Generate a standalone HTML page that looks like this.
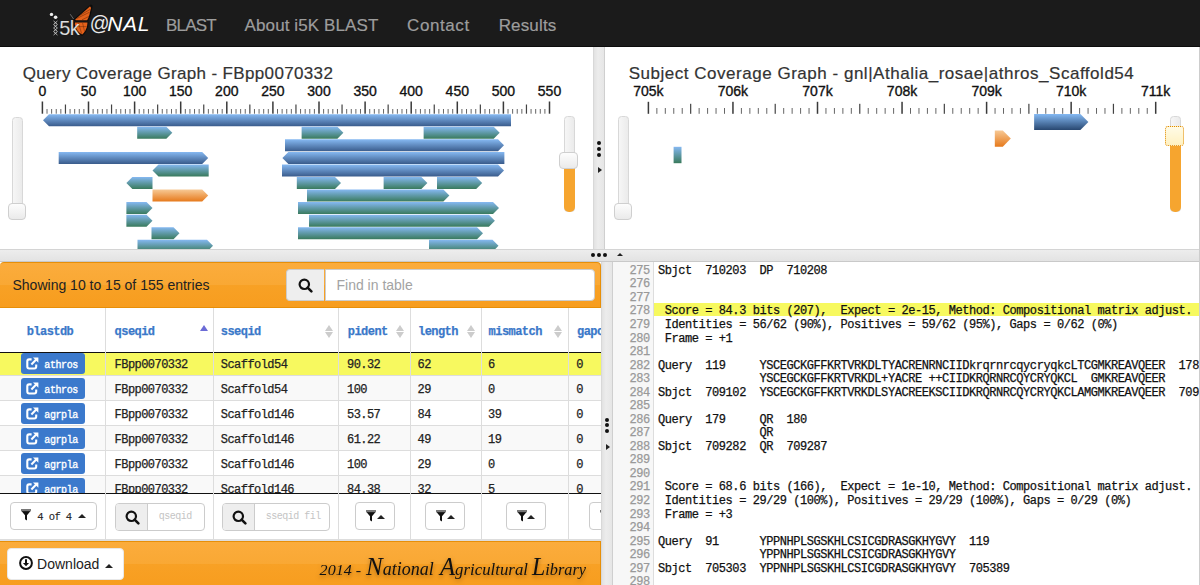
<!DOCTYPE html><html><head><meta charset="utf-8"><title>i5K BLAST</title><style>
*{box-sizing:border-box;margin:0;padding:0}
html,body{width:1200px;height:585px;overflow:hidden;background:#fff}
body{position:relative;font-family:"Liberation Sans",sans-serif;color:#333}
.a{position:absolute}
#hdr{left:0;top:0;width:1200px;height:47px;background:#1b1b1b;border-bottom:1px solid #0c0c0c}
.nav{position:absolute;top:15px;font-size:17px;color:#9d9d9d;-webkit-text-stroke:0.2px #9d9d9d;white-space:nowrap;line-height:22px}
.vdiv{background:linear-gradient(to right,#e2e2e2,#ececec 40%,#e6e6e6);border-left:1px solid #d8d8d8;border-right:1px solid #cfcfcf}
.hdiv{background:linear-gradient(#ededed,#e3e3e3);border-top:1px solid #d4d4d4;border-bottom:1px solid #c9c9c9}
.dot{position:absolute;width:4px;height:4px;border-radius:50%;background:#111}
.title{position:absolute;font-size:17px;color:#333;-webkit-text-stroke:0.2px #333;white-space:nowrap;line-height:20px}
.track{position:absolute;border:1px solid #d8d8d8;border-radius:3.5px;background:linear-gradient(to right,#f6f6f6,#ebebeb)}
.handle{position:absolute;border:1px solid #cfcfcf;border-radius:4px;background:linear-gradient(#fdfdfd,#eaeaea)}
.orangebar{background:linear-gradient(#fbac3c 0%,#f9a834 50%,#f8a125 50%,#f79d1f 100%);border:1px solid #e78f08}
.mono{font-family:"Liberation Mono",monospace;-webkit-text-stroke:0.25px currentColor}
</style></head><body>
<div id="hdr" class="a"></div>
<div class="nav" style="left:166px;letter-spacing:-0.8px">BLAST</div>
<div class="nav" style="left:244.6px;letter-spacing:0.1px">About i5K BLAST</div>
<div class="nav" style="left:407px;letter-spacing:0.6px">Contact</div>
<div class="nav" style="left:498.7px;letter-spacing:0.15px">Results</div>
<div class="a vdiv" style="left:593px;top:47px;width:12px;height:202px"></div>
<div class="a hdiv" style="left:0;top:249px;width:1200px;height:13px"></div>
<div class="a vdiv" style="left:601px;top:262px;width:12px;height:323px"></div>
<svg class="a" style="left:0;top:47px" width="593" height="202" viewBox="0 47 593 202"><defs>
<linearGradient id="gB" x1="0" y1="0" x2="0" y2="1"><stop offset="0" stop-color="#86b9f2"/><stop offset="1" stop-color="#3a5c8c"/></linearGradient>
<linearGradient id="gT" x1="0" y1="0" x2="0" y2="1"><stop offset="0" stop-color="#85b8f1"/><stop offset="1" stop-color="#397a5c"/></linearGradient>
<linearGradient id="gO" x1="0" y1="0" x2="0" y2="1"><stop offset="0" stop-color="#f7c995"/><stop offset="1" stop-color="#e6791b"/></linearGradient>
<linearGradient id="gB2" x1="0" y1="0" x2="0" y2="1"><stop offset="0" stop-color="#84b9f3"/><stop offset="1" stop-color="#284770"/></linearGradient>
</defs>
<rect x="41.65" y="101.5" width="1.5" height="12.2" fill="#3a3a3a"/>
<rect x="46.51" y="109" width="1" height="4.7" fill="#666"/>
<rect x="51.12" y="109" width="1" height="4.7" fill="#666"/>
<rect x="55.73" y="109" width="1" height="4.7" fill="#666"/>
<rect x="60.34" y="109" width="1" height="4.7" fill="#666"/>
<rect x="64.85" y="104.5" width="1.2" height="9.2" fill="#444"/>
<rect x="69.56" y="109" width="1" height="4.7" fill="#666"/>
<rect x="74.17" y="109" width="1" height="4.7" fill="#666"/>
<rect x="78.78" y="109" width="1" height="4.7" fill="#666"/>
<rect x="83.39" y="109" width="1" height="4.7" fill="#666"/>
<rect x="87.75" y="101.5" width="1.5" height="12.2" fill="#3a3a3a"/>
<rect x="92.61" y="109" width="1" height="4.7" fill="#666"/>
<rect x="97.22" y="109" width="1" height="4.7" fill="#666"/>
<rect x="101.83" y="109" width="1" height="4.7" fill="#666"/>
<rect x="106.44" y="109" width="1" height="4.7" fill="#666"/>
<rect x="110.95" y="104.5" width="1.2" height="9.2" fill="#444"/>
<rect x="115.66" y="109" width="1" height="4.7" fill="#666"/>
<rect x="120.27" y="109" width="1" height="4.7" fill="#666"/>
<rect x="124.88" y="109" width="1" height="4.7" fill="#666"/>
<rect x="129.49" y="109" width="1" height="4.7" fill="#666"/>
<rect x="133.85" y="101.5" width="1.5" height="12.2" fill="#3a3a3a"/>
<rect x="138.71" y="109" width="1" height="4.7" fill="#666"/>
<rect x="143.32" y="109" width="1" height="4.7" fill="#666"/>
<rect x="147.93" y="109" width="1" height="4.7" fill="#666"/>
<rect x="152.54" y="109" width="1" height="4.7" fill="#666"/>
<rect x="157.05" y="104.5" width="1.2" height="9.2" fill="#444"/>
<rect x="161.76" y="109" width="1" height="4.7" fill="#666"/>
<rect x="166.37" y="109" width="1" height="4.7" fill="#666"/>
<rect x="170.98" y="109" width="1" height="4.7" fill="#666"/>
<rect x="175.59" y="109" width="1" height="4.7" fill="#666"/>
<rect x="179.95" y="101.5" width="1.5" height="12.2" fill="#3a3a3a"/>
<rect x="184.81" y="109" width="1" height="4.7" fill="#666"/>
<rect x="189.42" y="109" width="1" height="4.7" fill="#666"/>
<rect x="194.03" y="109" width="1" height="4.7" fill="#666"/>
<rect x="198.64" y="109" width="1" height="4.7" fill="#666"/>
<rect x="203.15" y="104.5" width="1.2" height="9.2" fill="#444"/>
<rect x="207.86" y="109" width="1" height="4.7" fill="#666"/>
<rect x="212.47" y="109" width="1" height="4.7" fill="#666"/>
<rect x="217.08" y="109" width="1" height="4.7" fill="#666"/>
<rect x="221.69" y="109" width="1" height="4.7" fill="#666"/>
<rect x="226.05" y="101.5" width="1.5" height="12.2" fill="#3a3a3a"/>
<rect x="230.91" y="109" width="1" height="4.7" fill="#666"/>
<rect x="235.52" y="109" width="1" height="4.7" fill="#666"/>
<rect x="240.13" y="109" width="1" height="4.7" fill="#666"/>
<rect x="244.74" y="109" width="1" height="4.7" fill="#666"/>
<rect x="249.25" y="104.5" width="1.2" height="9.2" fill="#444"/>
<rect x="253.96" y="109" width="1" height="4.7" fill="#666"/>
<rect x="258.57" y="109" width="1" height="4.7" fill="#666"/>
<rect x="263.18" y="109" width="1" height="4.7" fill="#666"/>
<rect x="267.79" y="109" width="1" height="4.7" fill="#666"/>
<rect x="272.15" y="101.5" width="1.5" height="12.2" fill="#3a3a3a"/>
<rect x="277.01" y="109" width="1" height="4.7" fill="#666"/>
<rect x="281.62" y="109" width="1" height="4.7" fill="#666"/>
<rect x="286.23" y="109" width="1" height="4.7" fill="#666"/>
<rect x="290.84" y="109" width="1" height="4.7" fill="#666"/>
<rect x="295.35" y="104.5" width="1.2" height="9.2" fill="#444"/>
<rect x="300.06" y="109" width="1" height="4.7" fill="#666"/>
<rect x="304.67" y="109" width="1" height="4.7" fill="#666"/>
<rect x="309.28" y="109" width="1" height="4.7" fill="#666"/>
<rect x="313.89" y="109" width="1" height="4.7" fill="#666"/>
<rect x="318.25" y="101.5" width="1.5" height="12.2" fill="#3a3a3a"/>
<rect x="323.11" y="109" width="1" height="4.7" fill="#666"/>
<rect x="327.72" y="109" width="1" height="4.7" fill="#666"/>
<rect x="332.33" y="109" width="1" height="4.7" fill="#666"/>
<rect x="336.94" y="109" width="1" height="4.7" fill="#666"/>
<rect x="341.45" y="104.5" width="1.2" height="9.2" fill="#444"/>
<rect x="346.16" y="109" width="1" height="4.7" fill="#666"/>
<rect x="350.77" y="109" width="1" height="4.7" fill="#666"/>
<rect x="355.38" y="109" width="1" height="4.7" fill="#666"/>
<rect x="359.99" y="109" width="1" height="4.7" fill="#666"/>
<rect x="364.35" y="101.5" width="1.5" height="12.2" fill="#3a3a3a"/>
<rect x="369.21" y="109" width="1" height="4.7" fill="#666"/>
<rect x="373.82" y="109" width="1" height="4.7" fill="#666"/>
<rect x="378.43" y="109" width="1" height="4.7" fill="#666"/>
<rect x="383.04" y="109" width="1" height="4.7" fill="#666"/>
<rect x="387.55" y="104.5" width="1.2" height="9.2" fill="#444"/>
<rect x="392.26" y="109" width="1" height="4.7" fill="#666"/>
<rect x="396.87" y="109" width="1" height="4.7" fill="#666"/>
<rect x="401.48" y="109" width="1" height="4.7" fill="#666"/>
<rect x="406.09" y="109" width="1" height="4.7" fill="#666"/>
<rect x="410.45" y="101.5" width="1.5" height="12.2" fill="#3a3a3a"/>
<rect x="415.31" y="109" width="1" height="4.7" fill="#666"/>
<rect x="419.92" y="109" width="1" height="4.7" fill="#666"/>
<rect x="424.53" y="109" width="1" height="4.7" fill="#666"/>
<rect x="429.14" y="109" width="1" height="4.7" fill="#666"/>
<rect x="433.65" y="104.5" width="1.2" height="9.2" fill="#444"/>
<rect x="438.36" y="109" width="1" height="4.7" fill="#666"/>
<rect x="442.97" y="109" width="1" height="4.7" fill="#666"/>
<rect x="447.58" y="109" width="1" height="4.7" fill="#666"/>
<rect x="452.19" y="109" width="1" height="4.7" fill="#666"/>
<rect x="456.55" y="101.5" width="1.5" height="12.2" fill="#3a3a3a"/>
<rect x="461.41" y="109" width="1" height="4.7" fill="#666"/>
<rect x="466.02" y="109" width="1" height="4.7" fill="#666"/>
<rect x="470.63" y="109" width="1" height="4.7" fill="#666"/>
<rect x="475.24" y="109" width="1" height="4.7" fill="#666"/>
<rect x="479.75" y="104.5" width="1.2" height="9.2" fill="#444"/>
<rect x="484.46" y="109" width="1" height="4.7" fill="#666"/>
<rect x="489.07" y="109" width="1" height="4.7" fill="#666"/>
<rect x="493.68" y="109" width="1" height="4.7" fill="#666"/>
<rect x="498.29" y="109" width="1" height="4.7" fill="#666"/>
<rect x="502.65" y="101.5" width="1.5" height="12.2" fill="#3a3a3a"/>
<rect x="507.51" y="109" width="1" height="4.7" fill="#666"/>
<rect x="512.12" y="109" width="1" height="4.7" fill="#666"/>
<rect x="516.73" y="109" width="1" height="4.7" fill="#666"/>
<rect x="521.34" y="109" width="1" height="4.7" fill="#666"/>
<rect x="525.85" y="104.5" width="1.2" height="9.2" fill="#444"/>
<rect x="530.56" y="109" width="1" height="4.7" fill="#666"/>
<rect x="535.17" y="109" width="1" height="4.7" fill="#666"/>
<rect x="539.78" y="109" width="1" height="4.7" fill="#666"/>
<rect x="544.39" y="109" width="1" height="4.7" fill="#666"/>
<rect x="548.75" y="101.5" width="1.5" height="12.2" fill="#3a3a3a"/>
<text x="42.40" y="96.3" text-anchor="middle" font-family="Liberation Sans" font-size="14" fill="#111" stroke="#111" stroke-width="0.35">0</text>
<text x="88.50" y="96.3" text-anchor="middle" font-family="Liberation Sans" font-size="14" fill="#111" stroke="#111" stroke-width="0.35">50</text>
<text x="134.60" y="96.3" text-anchor="middle" font-family="Liberation Sans" font-size="14" fill="#111" stroke="#111" stroke-width="0.35">100</text>
<text x="180.70" y="96.3" text-anchor="middle" font-family="Liberation Sans" font-size="14" fill="#111" stroke="#111" stroke-width="0.35">150</text>
<text x="226.80" y="96.3" text-anchor="middle" font-family="Liberation Sans" font-size="14" fill="#111" stroke="#111" stroke-width="0.35">200</text>
<text x="272.90" y="96.3" text-anchor="middle" font-family="Liberation Sans" font-size="14" fill="#111" stroke="#111" stroke-width="0.35">250</text>
<text x="319.00" y="96.3" text-anchor="middle" font-family="Liberation Sans" font-size="14" fill="#111" stroke="#111" stroke-width="0.35">300</text>
<text x="365.10" y="96.3" text-anchor="middle" font-family="Liberation Sans" font-size="14" fill="#111" stroke="#111" stroke-width="0.35">350</text>
<text x="411.20" y="96.3" text-anchor="middle" font-family="Liberation Sans" font-size="14" fill="#111" stroke="#111" stroke-width="0.35">400</text>
<text x="457.30" y="96.3" text-anchor="middle" font-family="Liberation Sans" font-size="14" fill="#111" stroke="#111" stroke-width="0.35">450</text>
<text x="503.40" y="96.3" text-anchor="middle" font-family="Liberation Sans" font-size="14" fill="#111" stroke="#111" stroke-width="0.35">500</text>
<text x="549.50" y="96.3" text-anchor="middle" font-family="Liberation Sans" font-size="14" fill="#111" stroke="#111" stroke-width="0.35">550</text>
<polygon points="43,120.2 49.0,114.2 511,114.2 511,126.2 49.0,126.2" fill="url(#gB)"/>
<polygon points="137.2,126.76 166.3,126.76 172.3,132.76 166.3,138.76 137.2,138.76" fill="url(#gT)"/>
<polygon points="301.6,126.76 337.4,126.76 343.4,132.76 337.4,138.76 301.6,138.76" fill="url(#gT)"/>
<polygon points="423.6,126.76 493.7,126.76 499.7,132.76 493.7,138.76 423.6,138.76" fill="url(#gT)"/>
<polygon points="285,139.32 498.0,139.32 504,145.32 498.0,151.32 285,151.32" fill="url(#gB)"/>
<polygon points="58.7,151.88 202.2,151.88 208.2,157.88 202.2,163.88 58.7,163.88" fill="url(#gB)"/>
<polygon points="282.4,157.88 288.4,151.88 504.4,151.88 504.4,163.88 288.4,163.88" fill="url(#gB)"/>
<polygon points="152.5,170.44 158.5,164.44 208.7,164.44 208.7,176.44 158.5,176.44" fill="url(#gT)"/>
<polygon points="282,164.44 498.0,164.44 504,170.44 498.0,176.44 282,176.44" fill="url(#gB)"/>
<polygon points="126.4,183.0 132.4,177.0 152.5,177.0 152.5,189.0 132.4,189.0" fill="url(#gT)"/>
<polygon points="296.8,177.0 335.0,177.0 341,183.0 335.0,189.0 296.8,189.0" fill="url(#gT)"/>
<polygon points="383.6,177.0 421.4,177.0 427.4,183.0 421.4,189.0 383.6,189.0" fill="url(#gT)"/>
<polygon points="437,177.0 476.2,177.0 482.2,183.0 476.2,189.0 437,189.0" fill="url(#gT)"/>
<polygon points="152.5,189.56 202.2,189.56 208.2,195.56 202.2,201.56 152.5,201.56" fill="url(#gO)"/>
<polygon points="307,189.56 443.4,189.56 449.4,195.56 443.4,201.56 307,201.56" fill="url(#gT)"/>
<polygon points="126.4,202.12 146.5,202.12 152.5,208.12 146.5,214.12 126.4,214.12" fill="url(#gT)"/>
<polygon points="298,202.12 493.0,202.12 499,208.12 493.0,214.12 298,214.12" fill="url(#gT)"/>
<polygon points="126.4,214.68 146.5,214.68 152.5,220.68 146.5,226.68 126.4,226.68" fill="url(#gT)"/>
<polygon points="309,214.68 488.9,214.68 494.9,220.68 488.9,226.68 309,226.68" fill="url(#gT)"/>
<polygon points="151.5,227.24 173.5,227.24 179.5,233.24 173.5,239.24 151.5,239.24" fill="url(#gT)"/>
<polygon points="298,227.24 477.0,227.24 483,233.24 477.0,239.24 298,239.24" fill="url(#gT)"/>
<polygon points="137.5,239.8 207.0,239.8 213,245.8 207.0,251.8 137.5,251.8" fill="url(#gT)"/>
<polygon points="429,239.8 492.5,239.8 498.5,245.8 492.5,251.8 429,251.8" fill="url(#gT)"/>
</svg>
<div class="title" style="left:22.7px;top:63.8px;letter-spacing:0.35px">Query Coverage Graph - FBpp0070332</div>
<div class="track" style="left:12.3px;top:116.5px;width:10.5px;height:103px"></div>
<div class="handle" style="left:8.2px;top:203.3px;width:17.5px;height:17px"></div>
<div class="track" style="left:563.5px;top:116.3px;width:11.2px;height:95.4px"></div>
<div class="a" style="left:563.5px;top:165px;width:11.2px;height:46.7px;background:#f6a52f;border-radius:0 0 5px 5px"></div>
<div class="handle" style="left:559.4px;top:152.2px;width:18.4px;height:17px"></div>
<svg class="a" style="left:605px;top:47px" width="594" height="202" viewBox="605 47 594 202"><defs>
<linearGradient id="gB" x1="0" y1="0" x2="0" y2="1"><stop offset="0" stop-color="#86b9f2"/><stop offset="1" stop-color="#3a5c8c"/></linearGradient>
<linearGradient id="gT" x1="0" y1="0" x2="0" y2="1"><stop offset="0" stop-color="#85b8f1"/><stop offset="1" stop-color="#397a5c"/></linearGradient>
<linearGradient id="gO" x1="0" y1="0" x2="0" y2="1"><stop offset="0" stop-color="#f7c995"/><stop offset="1" stop-color="#e6791b"/></linearGradient>
<linearGradient id="gB2" x1="0" y1="0" x2="0" y2="1"><stop offset="0" stop-color="#84b9f3"/><stop offset="1" stop-color="#284770"/></linearGradient>
</defs>
<rect x="647.65" y="101.8" width="1.5" height="12" fill="#3a3a3a"/>
<rect x="656.36" y="108" width="1" height="5.8" fill="#666"/>
<rect x="664.81" y="108" width="1" height="5.8" fill="#666"/>
<rect x="673.26" y="108" width="1" height="5.8" fill="#666"/>
<rect x="681.72" y="108" width="1" height="5.8" fill="#666"/>
<rect x="690.07" y="103.8" width="1.2" height="10" fill="#444"/>
<rect x="698.63" y="108" width="1" height="5.8" fill="#666"/>
<rect x="707.09" y="108" width="1" height="5.8" fill="#666"/>
<rect x="715.54" y="108" width="1" height="5.8" fill="#666"/>
<rect x="724.00" y="108" width="1" height="5.8" fill="#666"/>
<rect x="732.20" y="101.8" width="1.5" height="12" fill="#3a3a3a"/>
<rect x="740.90" y="108" width="1" height="5.8" fill="#666"/>
<rect x="749.36" y="108" width="1" height="5.8" fill="#666"/>
<rect x="757.81" y="108" width="1" height="5.8" fill="#666"/>
<rect x="766.27" y="108" width="1" height="5.8" fill="#666"/>
<rect x="774.62" y="103.8" width="1.2" height="10" fill="#444"/>
<rect x="783.18" y="108" width="1" height="5.8" fill="#666"/>
<rect x="791.63" y="108" width="1" height="5.8" fill="#666"/>
<rect x="800.09" y="108" width="1" height="5.8" fill="#666"/>
<rect x="808.54" y="108" width="1" height="5.8" fill="#666"/>
<rect x="816.75" y="101.8" width="1.5" height="12" fill="#3a3a3a"/>
<rect x="825.45" y="108" width="1" height="5.8" fill="#666"/>
<rect x="833.91" y="108" width="1" height="5.8" fill="#666"/>
<rect x="842.37" y="108" width="1" height="5.8" fill="#666"/>
<rect x="850.82" y="108" width="1" height="5.8" fill="#666"/>
<rect x="859.17" y="103.8" width="1.2" height="10" fill="#444"/>
<rect x="867.73" y="108" width="1" height="5.8" fill="#666"/>
<rect x="876.18" y="108" width="1" height="5.8" fill="#666"/>
<rect x="884.64" y="108" width="1" height="5.8" fill="#666"/>
<rect x="893.10" y="108" width="1" height="5.8" fill="#666"/>
<rect x="901.30" y="101.8" width="1.5" height="12" fill="#3a3a3a"/>
<rect x="910.00" y="108" width="1" height="5.8" fill="#666"/>
<rect x="918.46" y="108" width="1" height="5.8" fill="#666"/>
<rect x="926.91" y="108" width="1" height="5.8" fill="#666"/>
<rect x="935.37" y="108" width="1" height="5.8" fill="#666"/>
<rect x="943.73" y="103.8" width="1.2" height="10" fill="#444"/>
<rect x="952.28" y="108" width="1" height="5.8" fill="#666"/>
<rect x="960.73" y="108" width="1" height="5.8" fill="#666"/>
<rect x="969.19" y="108" width="1" height="5.8" fill="#666"/>
<rect x="977.64" y="108" width="1" height="5.8" fill="#666"/>
<rect x="985.85" y="101.8" width="1.5" height="12" fill="#3a3a3a"/>
<rect x="994.55" y="108" width="1" height="5.8" fill="#666"/>
<rect x="1003.01" y="108" width="1" height="5.8" fill="#666"/>
<rect x="1011.46" y="108" width="1" height="5.8" fill="#666"/>
<rect x="1019.92" y="108" width="1" height="5.8" fill="#666"/>
<rect x="1028.28" y="103.8" width="1.2" height="10" fill="#444"/>
<rect x="1036.83" y="108" width="1" height="5.8" fill="#666"/>
<rect x="1045.28" y="108" width="1" height="5.8" fill="#666"/>
<rect x="1053.74" y="108" width="1" height="5.8" fill="#666"/>
<rect x="1062.19" y="108" width="1" height="5.8" fill="#666"/>
<rect x="1070.40" y="101.8" width="1.5" height="12" fill="#3a3a3a"/>
<rect x="1079.11" y="108" width="1" height="5.8" fill="#666"/>
<rect x="1087.56" y="108" width="1" height="5.8" fill="#666"/>
<rect x="1096.01" y="108" width="1" height="5.8" fill="#666"/>
<rect x="1104.47" y="108" width="1" height="5.8" fill="#666"/>
<rect x="1112.83" y="103.8" width="1.2" height="10" fill="#444"/>
<rect x="1121.38" y="108" width="1" height="5.8" fill="#666"/>
<rect x="1129.84" y="108" width="1" height="5.8" fill="#666"/>
<rect x="1138.29" y="108" width="1" height="5.8" fill="#666"/>
<rect x="1146.74" y="108" width="1" height="5.8" fill="#666"/>
<rect x="1154.95" y="101.8" width="1.5" height="12" fill="#3a3a3a"/>
<text x="648.40" y="96.3" text-anchor="middle" font-family="Liberation Sans" font-size="14" fill="#111" stroke="#111" stroke-width="0.35">705k</text>
<text x="732.95" y="96.3" text-anchor="middle" font-family="Liberation Sans" font-size="14" fill="#111" stroke="#111" stroke-width="0.35">706k</text>
<text x="817.50" y="96.3" text-anchor="middle" font-family="Liberation Sans" font-size="14" fill="#111" stroke="#111" stroke-width="0.35">707k</text>
<text x="902.05" y="96.3" text-anchor="middle" font-family="Liberation Sans" font-size="14" fill="#111" stroke="#111" stroke-width="0.35">708k</text>
<text x="986.60" y="96.3" text-anchor="middle" font-family="Liberation Sans" font-size="14" fill="#111" stroke="#111" stroke-width="0.35">709k</text>
<text x="1071.15" y="96.3" text-anchor="middle" font-family="Liberation Sans" font-size="14" fill="#111" stroke="#111" stroke-width="0.35">710k</text>
<text x="1155.70" y="96.3" text-anchor="middle" font-family="Liberation Sans" font-size="14" fill="#111" stroke="#111" stroke-width="0.35">711k</text>
<polygon points="1034.1,114 1080.4,114 1088.4,122.0 1080.4,130 1034.1,130" fill="url(#gB2)"/>
<polygon points="994.8,130.4 1002.8,130.4 1010.8,138.6 1002.8,146.8 994.8,146.8" fill="url(#gO)"/>
<polygon points="673.6,146.8 681.5,146.8 681.5,163.20000000000002 673.6,163.20000000000002" fill="url(#gT)"/>
</svg>
<div class="title" style="left:628.7px;top:63.8px;letter-spacing:0.52px">Subject Coverage Graph - gnl|Athalia_rosae|athros_Scaffold54</div>
<div class="track" style="left:618px;top:116px;width:10.7px;height:103px"></div>
<div class="handle" style="left:613.6px;top:203.3px;width:18px;height:16.5px"></div>
<div class="track" style="left:1169.8px;top:116px;width:10.9px;height:95.8px"></div>
<div class="a" style="left:1169.8px;top:140px;width:10.9px;height:71.8px;background:#f6a52f;border-radius:0 0 5px 5px"></div>
<div class="a" style="left:1164.7px;top:126.3px;width:19.5px;height:19.3px;border:1px dotted #e08a00;border-radius:3px;background:linear-gradient(#fffbe6,#fff1c2)"></div>
<div class="dot" style="left:596.9px;top:141px"></div>
<div class="dot" style="left:596.9px;top:146.8px"></div>
<div class="dot" style="left:596.9px;top:152.8px"></div>
<div class="a" style="left:598px;top:167px;width:0;height:0;border-top:3px solid transparent;border-bottom:3px solid transparent;border-left:4px solid #222"></div>
<div class="dot" style="left:591px;top:253.1px"></div>
<div class="dot" style="left:597px;top:253.1px"></div>
<div class="dot" style="left:602.9px;top:253.1px"></div>
<div class="a" style="left:617.4px;top:252.5px;width:0;height:0;border-left:3px solid transparent;border-right:3px solid transparent;border-bottom:3px solid #222"></div>
<div class="a orangebar" style="left:0;top:262px;width:601px;height:46px;border-radius:4px 4px 0 0;border-left:none"></div>
<div class="a" style="left:12.5px;top:277px;font-size:14px;line-height:17px;color:#222;white-space:nowrap">Showing 10 to 15 of 155 entries</div>
<div class="a" style="left:286.3px;top:269px;width:38.2px;height:32.4px;background:#eee;border:1px solid #ccc;border-right:none;border-radius:4px 0 0 4px"></div>
<svg class="a" style="left:297.5px;top:278.3px" width="16" height="16" viewBox="0 0 16 16"><circle cx="6.3" cy="6.3" r="4.7" fill="none" stroke="#111" stroke-width="2.2"/><line x1="9.6" y1="9.6" x2="13.4" y2="13.4" stroke="#111" stroke-width="2.6" stroke-linecap="round"/></svg>
<div class="a" style="left:324.5px;top:269px;width:270px;height:32.4px;background:#fff;border:1px solid #ccc;border-radius:0 4px 4px 0"></div>
<div class="a" style="left:336.5px;top:277px;font-size:14px;line-height:17px;color:#a3a3a3;white-space:nowrap">Find in table</div>
<div class="a" style="left:0;top:308px;width:601px;height:233px;background:#fff;overflow:hidden">
<div class="a" style="left:0;top:42px;width:601px;height:25px;background:#f7f95f;border-top:1px solid #ddd"></div>
<div class="a" style="left:21.3px;top:45px;width:63.3px;height:21.3px;background:#3b79cc;border-radius:3px;color:#fff;line-height:21px"><svg style="position:absolute;left:4.6px;top:3.6px" width="13" height="13" viewBox="0 0 13 13"><path d="M5.6 2.4 H3.2 Q1.3 2.4 1.3 4.3 V9.6 Q1.3 11.5 3.2 11.5 H8.3 Q10.2 11.5 10.2 9.6 V7.4" fill="none" stroke="#fff" stroke-width="2.1"/><path d="M7 0.4 H12.4 V5.8 Z" fill="#fff"/><line x1="5.4" y1="7.4" x2="10.2" y2="2.6" stroke="#fff" stroke-width="2.1"/></svg><span class="mono" style="position:absolute;left:23px;top:2.2px;font-size:10px;letter-spacing:-0.4px;-webkit-text-stroke:0.35px #fff">athros</span></div>
<div class="a mono" style="left:114.6px;top:49.5px;font-size:12px;letter-spacing:-0.55px;line-height:15px;color:#222;white-space:nowrap">FBpp0070332</div>
<div class="a mono" style="left:220.8px;top:49.5px;font-size:12px;letter-spacing:-0.55px;line-height:15px;color:#222;white-space:nowrap">Scaffold54</div>
<div class="a mono" style="left:347px;top:49.5px;font-size:12px;letter-spacing:-0.55px;line-height:15px;color:#222;white-space:nowrap">90.32</div>
<div class="a mono" style="left:417.6px;top:49.5px;font-size:12px;letter-spacing:-0.55px;line-height:15px;color:#222;white-space:nowrap">62</div>
<div class="a mono" style="left:488px;top:49.5px;font-size:12px;letter-spacing:-0.55px;line-height:15px;color:#222;white-space:nowrap">6</div>
<div class="a mono" style="left:576.2px;top:49.5px;font-size:12px;letter-spacing:-0.55px;line-height:15px;color:#222;white-space:nowrap">0</div>
<div class="a" style="left:0;top:67px;width:601px;height:25px;background:#f9f9f9;border-top:1px solid #ddd"></div>
<div class="a" style="left:21.3px;top:70px;width:63.3px;height:21.3px;background:#3b79cc;border-radius:3px;color:#fff;line-height:21px"><svg style="position:absolute;left:4.6px;top:3.6px" width="13" height="13" viewBox="0 0 13 13"><path d="M5.6 2.4 H3.2 Q1.3 2.4 1.3 4.3 V9.6 Q1.3 11.5 3.2 11.5 H8.3 Q10.2 11.5 10.2 9.6 V7.4" fill="none" stroke="#fff" stroke-width="2.1"/><path d="M7 0.4 H12.4 V5.8 Z" fill="#fff"/><line x1="5.4" y1="7.4" x2="10.2" y2="2.6" stroke="#fff" stroke-width="2.1"/></svg><span class="mono" style="position:absolute;left:23px;top:2.2px;font-size:10px;letter-spacing:-0.4px;-webkit-text-stroke:0.35px #fff">athros</span></div>
<div class="a mono" style="left:114.6px;top:74.5px;font-size:12px;letter-spacing:-0.55px;line-height:15px;color:#222;white-space:nowrap">FBpp0070332</div>
<div class="a mono" style="left:220.8px;top:74.5px;font-size:12px;letter-spacing:-0.55px;line-height:15px;color:#222;white-space:nowrap">Scaffold54</div>
<div class="a mono" style="left:347px;top:74.5px;font-size:12px;letter-spacing:-0.55px;line-height:15px;color:#222;white-space:nowrap">100</div>
<div class="a mono" style="left:417.6px;top:74.5px;font-size:12px;letter-spacing:-0.55px;line-height:15px;color:#222;white-space:nowrap">29</div>
<div class="a mono" style="left:488px;top:74.5px;font-size:12px;letter-spacing:-0.55px;line-height:15px;color:#222;white-space:nowrap">0</div>
<div class="a mono" style="left:576.2px;top:74.5px;font-size:12px;letter-spacing:-0.55px;line-height:15px;color:#222;white-space:nowrap">0</div>
<div class="a" style="left:0;top:92px;width:601px;height:25px;background:#fff;border-top:1px solid #ddd"></div>
<div class="a" style="left:21.3px;top:95px;width:63.3px;height:21.3px;background:#3b79cc;border-radius:3px;color:#fff;line-height:21px"><svg style="position:absolute;left:4.6px;top:3.6px" width="13" height="13" viewBox="0 0 13 13"><path d="M5.6 2.4 H3.2 Q1.3 2.4 1.3 4.3 V9.6 Q1.3 11.5 3.2 11.5 H8.3 Q10.2 11.5 10.2 9.6 V7.4" fill="none" stroke="#fff" stroke-width="2.1"/><path d="M7 0.4 H12.4 V5.8 Z" fill="#fff"/><line x1="5.4" y1="7.4" x2="10.2" y2="2.6" stroke="#fff" stroke-width="2.1"/></svg><span class="mono" style="position:absolute;left:23px;top:2.2px;font-size:10px;letter-spacing:-0.4px;-webkit-text-stroke:0.35px #fff">agrpla</span></div>
<div class="a mono" style="left:114.6px;top:99.5px;font-size:12px;letter-spacing:-0.55px;line-height:15px;color:#222;white-space:nowrap">FBpp0070332</div>
<div class="a mono" style="left:220.8px;top:99.5px;font-size:12px;letter-spacing:-0.55px;line-height:15px;color:#222;white-space:nowrap">Scaffold146</div>
<div class="a mono" style="left:347px;top:99.5px;font-size:12px;letter-spacing:-0.55px;line-height:15px;color:#222;white-space:nowrap">53.57</div>
<div class="a mono" style="left:417.6px;top:99.5px;font-size:12px;letter-spacing:-0.55px;line-height:15px;color:#222;white-space:nowrap">84</div>
<div class="a mono" style="left:488px;top:99.5px;font-size:12px;letter-spacing:-0.55px;line-height:15px;color:#222;white-space:nowrap">39</div>
<div class="a mono" style="left:576.2px;top:99.5px;font-size:12px;letter-spacing:-0.55px;line-height:15px;color:#222;white-space:nowrap">0</div>
<div class="a" style="left:0;top:117px;width:601px;height:25px;background:#f9f9f9;border-top:1px solid #ddd"></div>
<div class="a" style="left:21.3px;top:120px;width:63.3px;height:21.3px;background:#3b79cc;border-radius:3px;color:#fff;line-height:21px"><svg style="position:absolute;left:4.6px;top:3.6px" width="13" height="13" viewBox="0 0 13 13"><path d="M5.6 2.4 H3.2 Q1.3 2.4 1.3 4.3 V9.6 Q1.3 11.5 3.2 11.5 H8.3 Q10.2 11.5 10.2 9.6 V7.4" fill="none" stroke="#fff" stroke-width="2.1"/><path d="M7 0.4 H12.4 V5.8 Z" fill="#fff"/><line x1="5.4" y1="7.4" x2="10.2" y2="2.6" stroke="#fff" stroke-width="2.1"/></svg><span class="mono" style="position:absolute;left:23px;top:2.2px;font-size:10px;letter-spacing:-0.4px;-webkit-text-stroke:0.35px #fff">agrpla</span></div>
<div class="a mono" style="left:114.6px;top:124.5px;font-size:12px;letter-spacing:-0.55px;line-height:15px;color:#222;white-space:nowrap">FBpp0070332</div>
<div class="a mono" style="left:220.8px;top:124.5px;font-size:12px;letter-spacing:-0.55px;line-height:15px;color:#222;white-space:nowrap">Scaffold146</div>
<div class="a mono" style="left:347px;top:124.5px;font-size:12px;letter-spacing:-0.55px;line-height:15px;color:#222;white-space:nowrap">61.22</div>
<div class="a mono" style="left:417.6px;top:124.5px;font-size:12px;letter-spacing:-0.55px;line-height:15px;color:#222;white-space:nowrap">49</div>
<div class="a mono" style="left:488px;top:124.5px;font-size:12px;letter-spacing:-0.55px;line-height:15px;color:#222;white-space:nowrap">19</div>
<div class="a mono" style="left:576.2px;top:124.5px;font-size:12px;letter-spacing:-0.55px;line-height:15px;color:#222;white-space:nowrap">0</div>
<div class="a" style="left:0;top:142px;width:601px;height:25px;background:#fff;border-top:1px solid #ddd"></div>
<div class="a" style="left:21.3px;top:145px;width:63.3px;height:21.3px;background:#3b79cc;border-radius:3px;color:#fff;line-height:21px"><svg style="position:absolute;left:4.6px;top:3.6px" width="13" height="13" viewBox="0 0 13 13"><path d="M5.6 2.4 H3.2 Q1.3 2.4 1.3 4.3 V9.6 Q1.3 11.5 3.2 11.5 H8.3 Q10.2 11.5 10.2 9.6 V7.4" fill="none" stroke="#fff" stroke-width="2.1"/><path d="M7 0.4 H12.4 V5.8 Z" fill="#fff"/><line x1="5.4" y1="7.4" x2="10.2" y2="2.6" stroke="#fff" stroke-width="2.1"/></svg><span class="mono" style="position:absolute;left:23px;top:2.2px;font-size:10px;letter-spacing:-0.4px;-webkit-text-stroke:0.35px #fff">agrpla</span></div>
<div class="a mono" style="left:114.6px;top:149.5px;font-size:12px;letter-spacing:-0.55px;line-height:15px;color:#222;white-space:nowrap">FBpp0070332</div>
<div class="a mono" style="left:220.8px;top:149.5px;font-size:12px;letter-spacing:-0.55px;line-height:15px;color:#222;white-space:nowrap">Scaffold146</div>
<div class="a mono" style="left:347px;top:149.5px;font-size:12px;letter-spacing:-0.55px;line-height:15px;color:#222;white-space:nowrap">100</div>
<div class="a mono" style="left:417.6px;top:149.5px;font-size:12px;letter-spacing:-0.55px;line-height:15px;color:#222;white-space:nowrap">29</div>
<div class="a mono" style="left:488px;top:149.5px;font-size:12px;letter-spacing:-0.55px;line-height:15px;color:#222;white-space:nowrap">0</div>
<div class="a mono" style="left:576.2px;top:149.5px;font-size:12px;letter-spacing:-0.55px;line-height:15px;color:#222;white-space:nowrap">0</div>
<div class="a" style="left:0;top:167px;width:601px;height:25px;background:#f9f9f9;border-top:1px solid #ddd"></div>
<div class="a" style="left:21.3px;top:170px;width:63.3px;height:21.3px;background:#3b79cc;border-radius:3px;color:#fff;line-height:21px"><svg style="position:absolute;left:4.6px;top:3.6px" width="13" height="13" viewBox="0 0 13 13"><path d="M5.6 2.4 H3.2 Q1.3 2.4 1.3 4.3 V9.6 Q1.3 11.5 3.2 11.5 H8.3 Q10.2 11.5 10.2 9.6 V7.4" fill="none" stroke="#fff" stroke-width="2.1"/><path d="M7 0.4 H12.4 V5.8 Z" fill="#fff"/><line x1="5.4" y1="7.4" x2="10.2" y2="2.6" stroke="#fff" stroke-width="2.1"/></svg><span class="mono" style="position:absolute;left:23px;top:2.2px;font-size:10px;letter-spacing:-0.4px;-webkit-text-stroke:0.35px #fff">agrpla</span></div>
<div class="a mono" style="left:114.6px;top:174.5px;font-size:12px;letter-spacing:-0.55px;line-height:15px;color:#222;white-space:nowrap">FBpp0070332</div>
<div class="a mono" style="left:220.8px;top:174.5px;font-size:12px;letter-spacing:-0.55px;line-height:15px;color:#222;white-space:nowrap">Scaffold146</div>
<div class="a mono" style="left:347px;top:174.5px;font-size:12px;letter-spacing:-0.55px;line-height:15px;color:#222;white-space:nowrap">84.38</div>
<div class="a mono" style="left:417.6px;top:174.5px;font-size:12px;letter-spacing:-0.55px;line-height:15px;color:#222;white-space:nowrap">32</div>
<div class="a mono" style="left:488px;top:174.5px;font-size:12px;letter-spacing:-0.55px;line-height:15px;color:#222;white-space:nowrap">5</div>
<div class="a mono" style="left:576.2px;top:174.5px;font-size:12px;letter-spacing:-0.55px;line-height:15px;color:#222;white-space:nowrap">0</div>
<div class="a" style="left:0;top:0;width:601px;height:45px;background:#fff;border-bottom:1px solid #111"></div>
<div class="a mono" style="left:26.7px;top:16.5px;font-size:12px;font-weight:bold;letter-spacing:-0.55px;line-height:15px;color:#3a78c9;white-space:nowrap">blastdb</div>
<div class="a mono" style="left:114.6px;top:16.5px;font-size:12px;font-weight:bold;letter-spacing:-0.55px;line-height:15px;color:#3a78c9;white-space:nowrap">qseqid</div>
<div class="a mono" style="left:220.8px;top:16.5px;font-size:12px;font-weight:bold;letter-spacing:-0.55px;line-height:15px;color:#3a78c9;white-space:nowrap">sseqid</div>
<div class="a mono" style="left:347.8px;top:16.5px;font-size:12px;font-weight:bold;letter-spacing:-0.55px;line-height:15px;color:#3a78c9;white-space:nowrap">pident</div>
<div class="a mono" style="left:418px;top:16.5px;font-size:12px;font-weight:bold;letter-spacing:-0.55px;line-height:15px;color:#3a78c9;white-space:nowrap">length</div>
<div class="a mono" style="left:488.6px;top:16.5px;font-size:12px;font-weight:bold;letter-spacing:-0.55px;line-height:15px;color:#3a78c9;white-space:nowrap">mismatch</div>
<div class="a mono" style="left:577px;top:16.5px;font-size:12px;font-weight:bold;letter-spacing:-0.55px;line-height:15px;color:#3a78c9;white-space:nowrap">gapopen</div>
<div class="a" style="left:199.5px;top:17px;width:0;height:0;border-left:4.2px solid transparent;border-right:4.2px solid transparent;border-bottom:6.2px solid #6b6bd6"></div>
<div class="a" style="left:325.3px;top:16.8px;width:0;height:0;border-left:4.1px solid transparent;border-right:4.1px solid transparent;border-bottom:6.2px solid #ccc"></div>
<div class="a" style="left:325.3px;top:24px;width:0;height:0;border-left:4.1px solid transparent;border-right:4.1px solid transparent;border-top:6.2px solid #ccc"></div>
<div class="a" style="left:396.4px;top:16.8px;width:0;height:0;border-left:4.1px solid transparent;border-right:4.1px solid transparent;border-bottom:6.2px solid #ccc"></div>
<div class="a" style="left:396.4px;top:24px;width:0;height:0;border-left:4.1px solid transparent;border-right:4.1px solid transparent;border-top:6.2px solid #ccc"></div>
<div class="a" style="left:466.9px;top:16.8px;width:0;height:0;border-left:4.1px solid transparent;border-right:4.1px solid transparent;border-bottom:6.2px solid #ccc"></div>
<div class="a" style="left:466.9px;top:24px;width:0;height:0;border-left:4.1px solid transparent;border-right:4.1px solid transparent;border-top:6.2px solid #ccc"></div>
<div class="a" style="left:554.0px;top:16.8px;width:0;height:0;border-left:4.1px solid transparent;border-right:4.1px solid transparent;border-bottom:6.2px solid #ccc"></div>
<div class="a" style="left:554.0px;top:24px;width:0;height:0;border-left:4.1px solid transparent;border-right:4.1px solid transparent;border-top:6.2px solid #ccc"></div>
<div class="a" style="left:0;top:185px;width:601px;height:48px;background:#fff;border-top:1px solid #111;border-bottom:2px solid #ddd"></div>
<div class="a" style="left:105.0px;top:0;width:1px;height:231px;background:#ddd"></div>
<div class="a" style="left:212.8px;top:0;width:1px;height:231px;background:#ddd"></div>
<div class="a" style="left:338.0px;top:0;width:1px;height:231px;background:#ddd"></div>
<div class="a" style="left:410.0px;top:0;width:1px;height:231px;background:#ddd"></div>
<div class="a" style="left:480.5px;top:0;width:1px;height:231px;background:#ddd"></div>
<div class="a" style="left:568.0px;top:0;width:1px;height:231px;background:#ddd"></div>
<div class="a" style="left:10.4px;top:194.3px;width:87px;height:28px;border:1px solid #ccc;border-radius:4px;background:#fff"></div>
<svg class="a" style="left:20.8px;top:201.2px" width="10" height="12" viewBox="0 0 10 12"><path d="M0 0 H10 V1.6 L6 6.2 V11.5 L4 10.2 V6.2 L0 1.6 Z" fill="#111"/><rect x="0" y="0" width="10" height="2.2" fill="#777"/></svg>
<div class="a mono" style="left:37.3px;top:202.5px;font-size:10.5px;letter-spacing:-0.6px;line-height:12px;color:#222;-webkit-text-stroke:0.1px #222;white-space:pre">4 of 4</div>
<div class="a" style="left:77.5px;top:206.2px;width:0;height:0;border-left:4px solid transparent;border-right:4px solid transparent;border-bottom:4px solid #222"></div>
<div class="a" style="left:115.2px;top:194.5px;width:89.39999999999999px;height:28px;border:1px solid #ccc;border-radius:4px;background:#fff;overflow:hidden"><div style="position:absolute;left:0;top:0;width:32px;height:26px;background:#eee;border-right:1px solid #ccc"></div><div class="mono" style="position:absolute;left:42.5px;top:7.5px;font-size:10px;letter-spacing:-0.5px;line-height:12px;color:#c4c4c4;-webkit-text-stroke:0;white-space:pre">qseqid</div></div>
<svg class="a" style="left:124.5px;top:202.3px" width="16" height="16" viewBox="0 0 16 16"><circle cx="6.3" cy="6.3" r="4.7" fill="none" stroke="#111" stroke-width="2.2"/><line x1="9.6" y1="9.6" x2="13.4" y2="13.4" stroke="#111" stroke-width="2.6" stroke-linecap="round"/></svg>
<div class="a" style="left:222.3px;top:194.5px;width:107.69999999999999px;height:28px;border:1px solid #ccc;border-radius:4px;background:#fff;overflow:hidden"><div style="position:absolute;left:0;top:0;width:32px;height:26px;background:#eee;border-right:1px solid #ccc"></div><div class="mono" style="position:absolute;left:42.5px;top:7.5px;font-size:10px;letter-spacing:-0.5px;line-height:12px;color:#c4c4c4;-webkit-text-stroke:0;white-space:pre">sseqid fil</div></div>
<svg class="a" style="left:231.60000000000002px;top:202.3px" width="16" height="16" viewBox="0 0 16 16"><circle cx="6.3" cy="6.3" r="4.7" fill="none" stroke="#111" stroke-width="2.2"/><line x1="9.6" y1="9.6" x2="13.4" y2="13.4" stroke="#111" stroke-width="2.6" stroke-linecap="round"/></svg>
<div class="a" style="left:355.2px;top:194.3px;width:40px;height:28px;border:1px solid #ccc;border-radius:4px;background:#fff"></div>
<svg class="a" style="left:366.2px;top:201.6px" width="10" height="12" viewBox="0 0 10 12"><path d="M0 0 H10 V1.6 L6 6.2 V11.5 L4 10.2 V6.2 L0 1.6 Z" fill="#111"/><rect x="0" y="0" width="10" height="2.2" fill="#777"/></svg>
<div class="a" style="left:376.7px;top:206.6px;width:0;height:0;border-left:4px solid transparent;border-right:4px solid transparent;border-bottom:4px solid #222"></div>
<div class="a" style="left:425.2px;top:194.3px;width:40px;height:28px;border:1px solid #ccc;border-radius:4px;background:#fff"></div>
<svg class="a" style="left:436.2px;top:201.6px" width="10" height="12" viewBox="0 0 10 12"><path d="M0 0 H10 V1.6 L6 6.2 V11.5 L4 10.2 V6.2 L0 1.6 Z" fill="#111"/><rect x="0" y="0" width="10" height="2.2" fill="#777"/></svg>
<div class="a" style="left:446.7px;top:206.6px;width:0;height:0;border-left:4px solid transparent;border-right:4px solid transparent;border-bottom:4px solid #222"></div>
<div class="a" style="left:505.5px;top:194.3px;width:40px;height:28px;border:1px solid #ccc;border-radius:4px;background:#fff"></div>
<svg class="a" style="left:516.5px;top:201.6px" width="10" height="12" viewBox="0 0 10 12"><path d="M0 0 H10 V1.6 L6 6.2 V11.5 L4 10.2 V6.2 L0 1.6 Z" fill="#111"/><rect x="0" y="0" width="10" height="2.2" fill="#777"/></svg>
<div class="a" style="left:527.0px;top:206.6px;width:0;height:0;border-left:4px solid transparent;border-right:4px solid transparent;border-bottom:4px solid #222"></div>
<div class="a" style="left:588.5px;top:194.3px;width:40px;height:28px;border:1px solid #ccc;border-radius:4px;background:#fff"></div>
<svg class="a" style="left:599.5px;top:201.6px" width="10" height="12" viewBox="0 0 10 12"><path d="M0 0 H10 V1.6 L6 6.2 V11.5 L4 10.2 V6.2 L0 1.6 Z" fill="#111"/><rect x="0" y="0" width="10" height="2.2" fill="#777"/></svg>
<div class="a" style="left:610.0px;top:206.6px;width:0;height:0;border-left:4px solid transparent;border-right:4px solid transparent;border-bottom:4px solid #222"></div>
</div>
<div class="a orangebar" style="left:0;top:540.6px;width:601px;height:45px;border-left:none;border-bottom:none"></div>
<div class="a" style="left:7.2px;top:548.4px;width:116.7px;height:32px;background:#fff;border:1px solid #e8e8e8;border-radius:4px"></div>
<svg class="a" style="left:19px;top:556.3px" width="14" height="14" viewBox="0 0 14 14"><circle cx="7" cy="7" r="5.9" fill="none" stroke="#111" stroke-width="2"/><path d="M7 3.3 V8.6" stroke="#111" stroke-width="2"/><path d="M3.9 6.9 L7 10.3 L10.1 6.9 Z" fill="#111"/></svg>
<div class="a" style="left:37.1px;top:556.1px;font-size:14px;line-height:17px;color:#222;white-space:nowrap">Download</div>
<div class="a" style="left:104.7px;top:564px;width:0;height:0;border-left:4px solid transparent;border-right:4px solid transparent;border-bottom:4px solid #222"></div>
<svg class="a" style="left:300px;top:545px;filter:drop-shadow(0 2px 2px rgba(90,45,0,.5))" width="300" height="40" viewBox="300 545 300 40">
<g font-family="Liberation Serif" font-style="italic" fill="#111">
<text x="319.6" y="575" font-size="15" textLength="41.5" lengthAdjust="spacingAndGlyphs">2014 -</text>
<text x="366" y="575" font-size="18"><tspan font-size="25">N</tspan>ational</text>
<text x="440" y="575" font-size="17" textLength="88" lengthAdjust="spacingAndGlyphs"><tspan font-size="25">A</tspan>gricultural</text>
<text x="532" y="575" font-size="17" textLength="54" lengthAdjust="spacingAndGlyphs"><tspan font-size="25">L</tspan>ibrary</text>
</g></svg>
<div class="a" style="left:613px;top:262px;width:586px;height:323px;background:#fff;overflow:hidden">
<div class="a" style="left:0;top:0;width:40.5px;height:323px;background:#f7f7f7;border-right:1px solid #ddd"></div>
<div class="a" style="left:41px;top:40.72px;width:545px;height:13.3px;background:#f7f95f"></div>
<div class="a mono" style="left:0;width:36.8px;text-align:right;top:2.80px;font-size:12px;letter-spacing:-0.44px;line-height:13.5px;color:#999">275</div>
<div class="a mono" style="left:45px;top:2.80px;font-size:12px;letter-spacing:-0.44px;line-height:13.5px;color:#111;white-space:pre">Sbjct  710203  DP  710208</div>
<div class="a mono" style="left:0;width:36.8px;text-align:right;top:16.34px;font-size:12px;letter-spacing:-0.44px;line-height:13.5px;color:#999">276</div>
<div class="a mono" style="left:0;width:36.8px;text-align:right;top:29.88px;font-size:12px;letter-spacing:-0.44px;line-height:13.5px;color:#999">277</div>
<div class="a mono" style="left:0;width:36.8px;text-align:right;top:43.42px;font-size:12px;letter-spacing:-0.44px;line-height:13.5px;color:#999">278</div>
<div class="a mono" style="left:45px;top:43.42px;font-size:12px;letter-spacing:-0.44px;line-height:13.5px;color:#111;white-space:pre"> Score = 84.3 bits (207),  Expect = 2e-15, Method: Compositional matrix adjust.</div>
<div class="a mono" style="left:0;width:36.8px;text-align:right;top:56.96px;font-size:12px;letter-spacing:-0.44px;line-height:13.5px;color:#999">279</div>
<div class="a mono" style="left:45px;top:56.96px;font-size:12px;letter-spacing:-0.44px;line-height:13.5px;color:#111;white-space:pre"> Identities = 56/62 (90%), Positives = 59/62 (95%), Gaps = 0/62 (0%)</div>
<div class="a mono" style="left:0;width:36.8px;text-align:right;top:70.50px;font-size:12px;letter-spacing:-0.44px;line-height:13.5px;color:#999">280</div>
<div class="a mono" style="left:45px;top:70.50px;font-size:12px;letter-spacing:-0.44px;line-height:13.5px;color:#111;white-space:pre"> Frame = +1</div>
<div class="a mono" style="left:0;width:36.8px;text-align:right;top:84.04px;font-size:12px;letter-spacing:-0.44px;line-height:13.5px;color:#999">281</div>
<div class="a mono" style="left:0;width:36.8px;text-align:right;top:97.58px;font-size:12px;letter-spacing:-0.44px;line-height:13.5px;color:#999">282</div>
<div class="a mono" style="left:45px;top:97.58px;font-size:12px;letter-spacing:-0.44px;line-height:13.5px;color:#111;white-space:pre">Query  119     YSCEGCKGFFKRTVRKDLTYACRENRNCIIDkrqrnrcqycryqkcLTCGMKREAVQEER  178</div>
<div class="a mono" style="left:0;width:36.8px;text-align:right;top:111.12px;font-size:12px;letter-spacing:-0.44px;line-height:13.5px;color:#999">283</div>
<div class="a mono" style="left:45px;top:111.12px;font-size:12px;letter-spacing:-0.44px;line-height:13.5px;color:#111;white-space:pre">               YSCEGCKGFFKRTVRKDL+YACRE ++CIIDKRQRNRCQYCRYQKCL  GMKREAVQEER</div>
<div class="a mono" style="left:0;width:36.8px;text-align:right;top:124.66px;font-size:12px;letter-spacing:-0.44px;line-height:13.5px;color:#999">284</div>
<div class="a mono" style="left:45px;top:124.66px;font-size:12px;letter-spacing:-0.44px;line-height:13.5px;color:#111;white-space:pre">Sbjct  709102  YSCEGCKGFFKRTVRKDLSYACREEKSCIIDKRQRNRCQYCRYQKCLAMGMKREAVQEER  709287</div>
<div class="a mono" style="left:0;width:36.8px;text-align:right;top:138.20px;font-size:12px;letter-spacing:-0.44px;line-height:13.5px;color:#999">285</div>
<div class="a mono" style="left:0;width:36.8px;text-align:right;top:151.74px;font-size:12px;letter-spacing:-0.44px;line-height:13.5px;color:#999">286</div>
<div class="a mono" style="left:45px;top:151.74px;font-size:12px;letter-spacing:-0.44px;line-height:13.5px;color:#111;white-space:pre">Query  179     QR  180</div>
<div class="a mono" style="left:0;width:36.8px;text-align:right;top:165.28px;font-size:12px;letter-spacing:-0.44px;line-height:13.5px;color:#999">287</div>
<div class="a mono" style="left:45px;top:165.28px;font-size:12px;letter-spacing:-0.44px;line-height:13.5px;color:#111;white-space:pre">               QR</div>
<div class="a mono" style="left:0;width:36.8px;text-align:right;top:178.82px;font-size:12px;letter-spacing:-0.44px;line-height:13.5px;color:#999">288</div>
<div class="a mono" style="left:45px;top:178.82px;font-size:12px;letter-spacing:-0.44px;line-height:13.5px;color:#111;white-space:pre">Sbjct  709282  QR  709287</div>
<div class="a mono" style="left:0;width:36.8px;text-align:right;top:192.36px;font-size:12px;letter-spacing:-0.44px;line-height:13.5px;color:#999">289</div>
<div class="a mono" style="left:0;width:36.8px;text-align:right;top:205.90px;font-size:12px;letter-spacing:-0.44px;line-height:13.5px;color:#999">290</div>
<div class="a mono" style="left:0;width:36.8px;text-align:right;top:219.44px;font-size:12px;letter-spacing:-0.44px;line-height:13.5px;color:#999">291</div>
<div class="a mono" style="left:45px;top:219.44px;font-size:12px;letter-spacing:-0.44px;line-height:13.5px;color:#111;white-space:pre"> Score = 68.6 bits (166),  Expect = 1e-10, Method: Compositional matrix adjust.</div>
<div class="a mono" style="left:0;width:36.8px;text-align:right;top:232.98px;font-size:12px;letter-spacing:-0.44px;line-height:13.5px;color:#999">292</div>
<div class="a mono" style="left:45px;top:232.98px;font-size:12px;letter-spacing:-0.44px;line-height:13.5px;color:#111;white-space:pre"> Identities = 29/29 (100%), Positives = 29/29 (100%), Gaps = 0/29 (0%)</div>
<div class="a mono" style="left:0;width:36.8px;text-align:right;top:246.52px;font-size:12px;letter-spacing:-0.44px;line-height:13.5px;color:#999">293</div>
<div class="a mono" style="left:45px;top:246.52px;font-size:12px;letter-spacing:-0.44px;line-height:13.5px;color:#111;white-space:pre"> Frame = +3</div>
<div class="a mono" style="left:0;width:36.8px;text-align:right;top:260.06px;font-size:12px;letter-spacing:-0.44px;line-height:13.5px;color:#999">294</div>
<div class="a mono" style="left:0;width:36.8px;text-align:right;top:273.60px;font-size:12px;letter-spacing:-0.44px;line-height:13.5px;color:#999">295</div>
<div class="a mono" style="left:45px;top:273.60px;font-size:12px;letter-spacing:-0.44px;line-height:13.5px;color:#111;white-space:pre">Query  91      YPPNHPLSGSKHLCSICGDRASGKHYGVY  119</div>
<div class="a mono" style="left:0;width:36.8px;text-align:right;top:287.14px;font-size:12px;letter-spacing:-0.44px;line-height:13.5px;color:#999">296</div>
<div class="a mono" style="left:45px;top:287.14px;font-size:12px;letter-spacing:-0.44px;line-height:13.5px;color:#111;white-space:pre">               YPPNHPLSGSKHLCSICGDRASGKHYGVY</div>
<div class="a mono" style="left:0;width:36.8px;text-align:right;top:300.68px;font-size:12px;letter-spacing:-0.44px;line-height:13.5px;color:#999">297</div>
<div class="a mono" style="left:45px;top:300.68px;font-size:12px;letter-spacing:-0.44px;line-height:13.5px;color:#111;white-space:pre">Sbjct  705303  YPPNHPLSGSKHLCSICGDRASGKHYGVY  705389</div>
<div class="a mono" style="left:0;width:36.8px;text-align:right;top:314.22px;font-size:12px;letter-spacing:-0.44px;line-height:13.5px;color:#999">298</div>
</div>
<div class="dot" style="left:604.5px;top:417.5px"></div>
<div class="dot" style="left:604.5px;top:423.1px"></div>
<div class="dot" style="left:604.5px;top:428.9px"></div>
<div class="a" style="left:605.5px;top:443.8px;width:0;height:0;border-top:3px solid transparent;border-bottom:3px solid transparent;border-left:4px solid #222"></div>
<svg class="a" style="left:44px;top:2px" width="112" height="40" viewBox="44 2 112 40">
<circle cx="51.5" cy="14.4" r="1.7" fill="#eee"/><circle cx="55.6" cy="17.2" r="1.8" fill="#eee"/>
<path d="M53.6 21 L57.4 24.5 L53.6 28 L57.4 31.5 L53.6 35 M57.4 21 L53.6 24.5 L57.4 28 L53.6 31.5 L57.4 35" stroke="#cfcfcf" stroke-width="0.9" fill="none"/>
<path d="M70.2 14.2 L73.6 19" stroke="#888" stroke-width="0.7"/>
<path d="M73 19.8 L90.6 4.4 Q93 4.4 92.4 7.4 L90.8 14.8 Q89.8 18.6 88 21.2 L74.4 21.2 Z" fill="#0d0d0d"/>
<path d="M75.2 19.6 L89.8 6.4 Q91.2 6.6 90.9 8.2 L89.5 14.6 Q88.7 17.8 87.1 20.2 L75.8 20.3 Z" fill="#e4611a"/>
<path d="M76.5 18.6 L89.6 12.2 M79.5 15.6 L90.2 9.4 M82 19.8 L89 16.4" stroke="#6a2a08" stroke-width="0.55"/>
<path d="M73.6 21.8 L88.6 21.8 Q88.8 27.2 86.2 31.6 Q84.2 34.8 82.2 36 Q78.8 35 76.4 31.2 Q74.2 27.8 73.6 24.2 Z" fill="#0d0d0d"/>
<path d="M74.9 22.6 L87.5 22.6 Q87.5 27.2 85.3 30.8 Q83.7 33.4 82.2 34.4 Q79.5 33.6 77.5 30.6 Q75.5 27.6 74.9 24.6 Z" fill="#e4611a"/>
<path d="M78.5 23 L81.6 33.6 M82.6 23 L84.6 31.6 M76 26.6 L86.8 26.6" stroke="#6a2a08" stroke-width="0.5"/>
</svg>
<div class="a" style="left:59.2px;top:15.6px;font-size:20px;line-height:24px;color:#e0e0e0;letter-spacing:-0.6px;white-space:nowrap;-webkit-text-stroke:0.1px #1b1b1b">5k</div>
<div class="a" style="left:89.8px;top:10.6px;font-size:19.5px;line-height:24px;color:#e8e8e8;white-space:nowrap">@</div>
<div class="a" style="left:107.2px;top:12px;font-size:21px;line-height:24px;color:#fff;font-style:italic;letter-spacing:0.7px;white-space:nowrap">NAL</div>
<div class="a" style="left:1198.5px;top:47px;width:1.5px;height:538px;background:#cdcdcd"></div>
</body></html>
